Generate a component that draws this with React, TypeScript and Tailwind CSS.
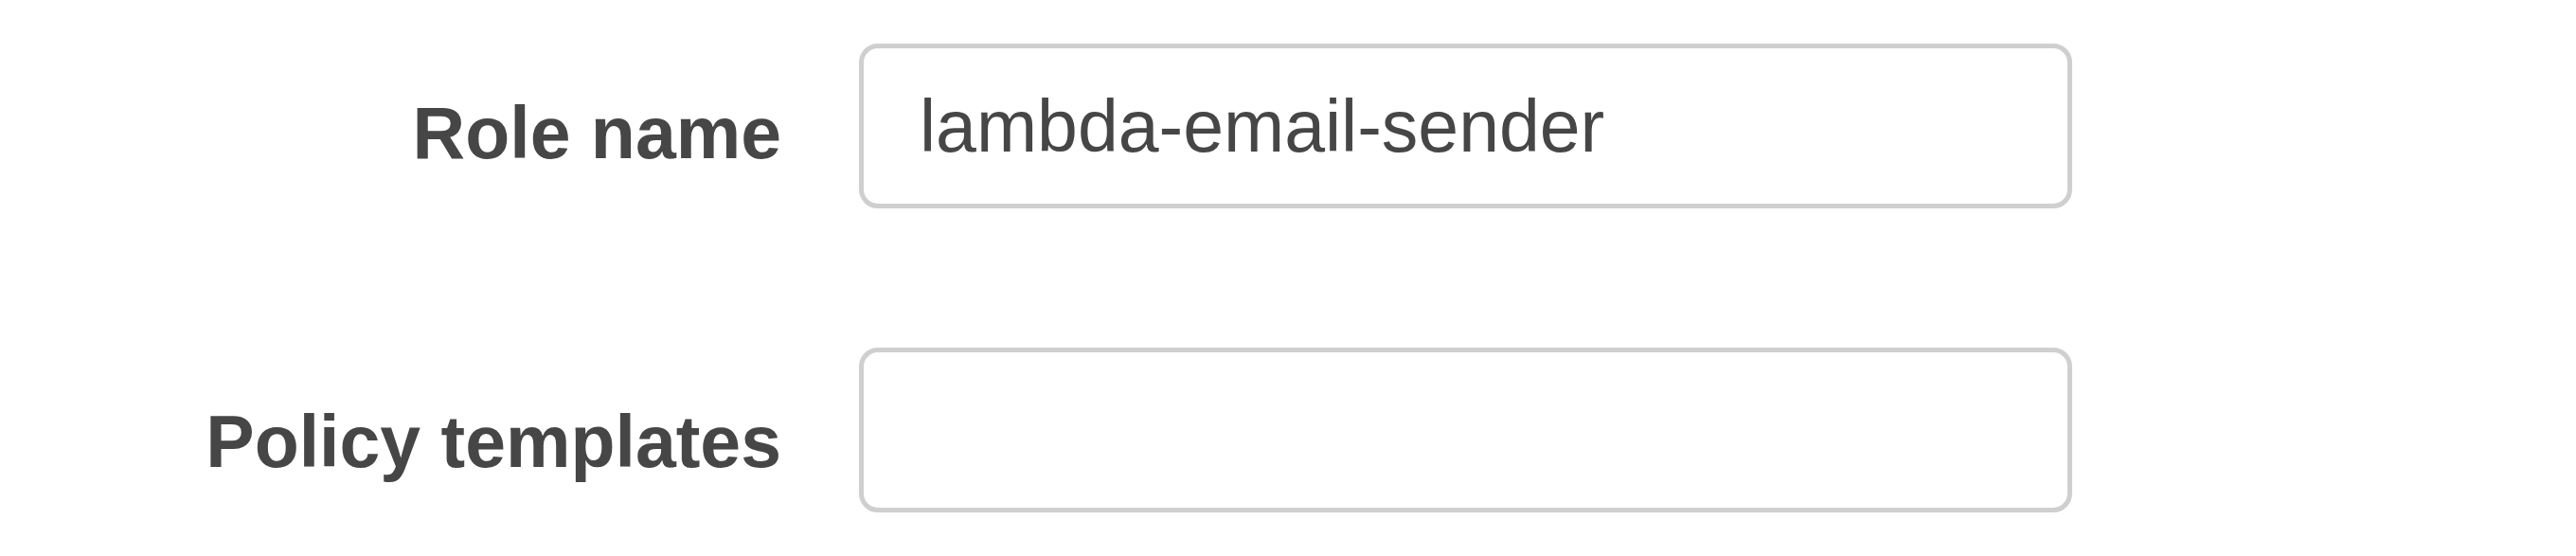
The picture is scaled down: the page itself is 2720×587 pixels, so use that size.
const FONT = "font-['Liberation_Sans','Helvetica_Neue',Arial,sans-serif]";

type Field = {
  label: string;
  value: string;
  labelPad: string;
};

const FIELDS: Field[] = [
  { label: "Role name", value: "lambda-email-sender", labelPad: "pt-[56px]" },
  { label: "Policy templates", value: "", labelPad: "pt-[61px]" },
];

export default function App() {
  return (
    <div className={`min-h-[587px] w-full bg-white ${FONT}`}>
      <div className="flex flex-col gap-[147px] pt-[46px]">
        {FIELDS.map((field) => (
          <div key={field.label} className="flex items-start">
            <label
              className={`w-[825px] shrink-0 text-right text-[77px] font-bold leading-none text-[#464646] ${field.labelPad}`}
            >
              {field.label}
            </label>
            <input
              readOnly
              value={field.value}
              className="ml-[82px] h-[174px] w-[1281px] rounded-[20px] border-[5px] border-[#cfcfcf] bg-white pl-[59px] text-[77px] text-[#464646] outline-none"
            />
          </div>
        ))}
      </div>
    </div>
  );
}
